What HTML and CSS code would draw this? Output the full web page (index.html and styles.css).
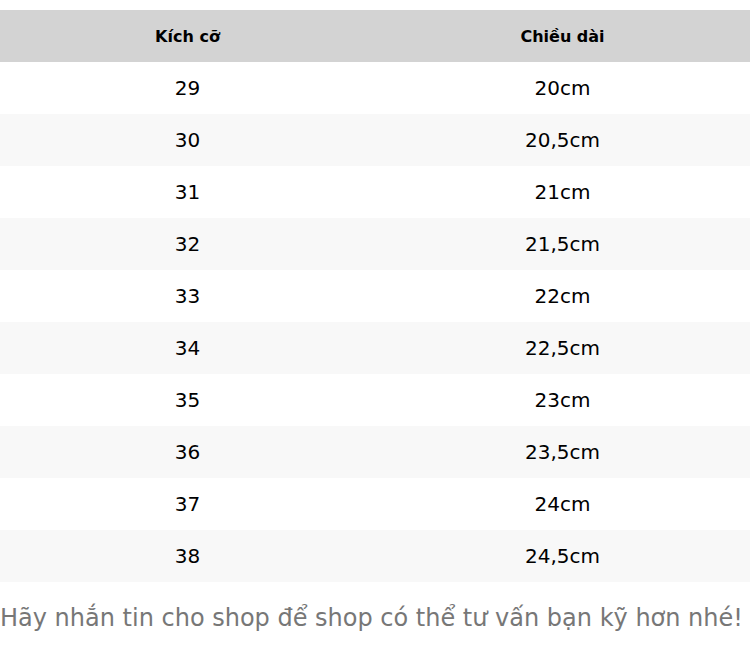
FILE: index.html
```html
<!DOCTYPE html>
<html lang="vi">
<head>
<meta charset="utf-8">
<link rel="stylesheet" href="styles.css">
</head>
<body>
<table class="size-table">
  <thead>
    <tr><th>Kích cỡ</th><th>Chiều dài</th></tr>
  </thead>
  <tbody>
    <tr><td>29</td><td>20cm</td></tr>
    <tr><td>30</td><td>20,5cm</td></tr>
    <tr><td>31</td><td>21cm</td></tr>
    <tr><td>32</td><td>21,5cm</td></tr>
    <tr><td>33</td><td>22cm</td></tr>
    <tr><td>34</td><td>22,5cm</td></tr>
    <tr><td>35</td><td>23cm</td></tr>
    <tr><td>36</td><td>23,5cm</td></tr>
    <tr><td>37</td><td>24cm</td></tr>
    <tr><td>38</td><td>24,5cm</td></tr>
  </tbody>
</table>
<p class="note">Hãy nhắn tin cho shop để shop có thể tư vấn bạn kỹ hơn nhé!</p>
</body>
</html>
```
FILE: styles.css
```css
body {
  margin: 0;
  font-family: "DejaVu Sans", sans-serif;
  background: #fff;
  color: #000;
}
.size-table {
  width: 750px;
  margin-top: 10px;
  border-collapse: collapse;
  table-layout: fixed;
}
.size-table th {
  background: #d3d3d3;
  height: 52px;
  font-size: 16px;
  font-weight: bold;
  text-align: center;
  padding: 0;
}
.size-table td {
  height: 52px;
  font-size: 20px;
  text-align: center;
  padding: 0;
}
.size-table tbody tr:nth-child(even) td {
  background: #f8f8f8;
}
.note {
  margin: 22px 0 0;
  font-size: 24px;
  color: #777;
  white-space: nowrap;
}
```
